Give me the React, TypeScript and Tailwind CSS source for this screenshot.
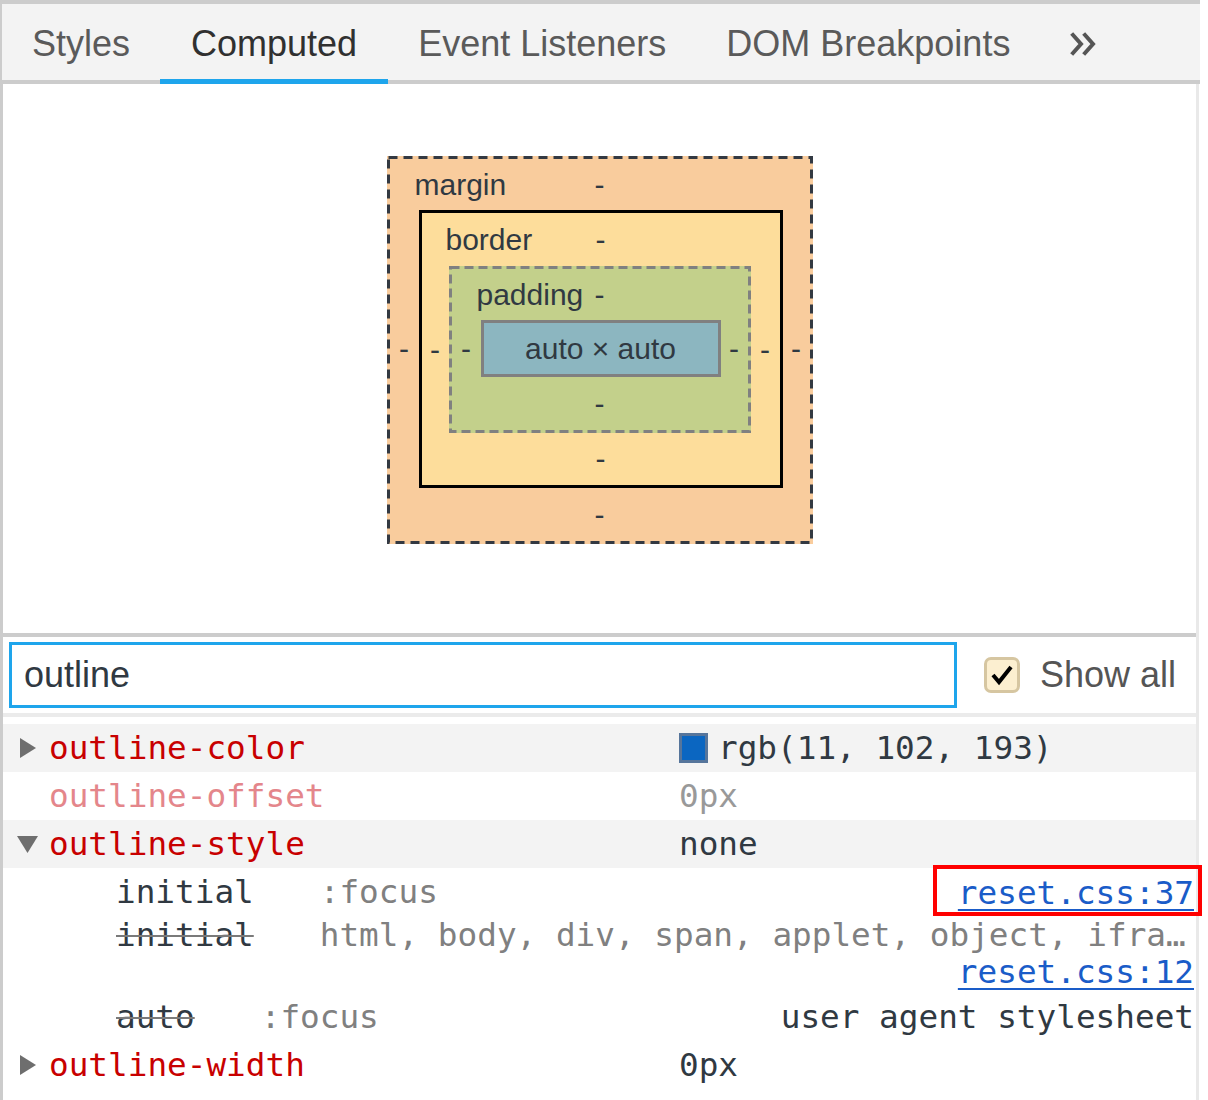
import React from 'react';

const mono = "font-['DejaVu_Sans_Mono',monospace]";
const tabs = ['Styles', 'Computed', 'Event Listeners', 'DOM Breakpoints'];

function Triangle({ open }: { open?: boolean }) {
  if (open) {
    return (
      <svg width="21" height="17" viewBox="0 0 21 17">
        <path d="M0 0H21L10.5 17Z" fill="#6e6e6e" />
      </svg>
    );
  }
  return (
    <svg width="16" height="20" viewBox="0 0 16 20">
      <path d="M0 0L16 10L0 20Z" fill="#6e6e6e" />
    </svg>
  );
}

// dashed frame drawn as svg so the dash length matches devtools
function DashedFrame({ w, h, color, dash }: { w: number; h: number; color: string; dash: string }) {
  return (
    <svg width={w} height={h} className="absolute left-0 top-0 pointer-events-none">
      <rect x="1.5" y="1.5" width={w - 3} height={h - 3} fill="none" stroke={color} strokeWidth="3" strokeDasharray={dash} />
    </svg>
  );
}

function Dash() {
  return <span className="leading-none">-</span>;
}

function PropRow({
  name,
  children,
  striped,
  faded,
  open,
  expandable,
}: {
  name: string;
  children: React.ReactNode;
  striped?: boolean;
  faded?: boolean;
  open?: boolean;
  expandable?: boolean;
}) {
  return (
    <div className={`h-[48px] flex items-center ${striped ? 'bg-[#f3f3f3]' : 'bg-white'}`}>
      <div className={`w-[46px] flex items-center ${open ? 'pl-[14px]' : 'pl-[17px]'}`}>
        {expandable && <Triangle open={open} />}
      </div>
      <div className={`w-[630px] leading-none ${faded ? 'text-[#e4868b]' : 'text-[#c80000]'}`}>{name}</div>
      <div className={`flex items-center leading-none ${faded ? 'text-[#999999]' : 'text-[#303942]'}`}>{children}</div>
    </div>
  );
}

export default function App() {
  return (
    <div className="w-[1208px] h-[1100px] bg-white overflow-hidden font-['Liberation_Sans',Arial,sans-serif]">
      {/* tab strip */}
      <div className="w-[1200px] h-[84px] bg-[#f3f3f3] border-t-4 border-l-2 border-[#cccccc] flex shadow-[inset_0_-4px_0_#cccccc]">
        {tabs.map((t) => (
          <div
            key={t}
            className={`px-[30px] flex items-center text-[36px] ${
              t === 'Computed' ? 'px-[31px] text-[#303030] shadow-[inset_0_-5px_0_#1ea5ec]' : 'text-[#5a5a5a]'
            }`}
          >
            {t}
          </div>
        ))}
        <div className="pl-[30px] flex items-center">
          <svg width="28" height="24" viewBox="0 0 28 24" fill="none" stroke="#555555" strokeWidth="4" strokeLinecap="square">
            <path d="M3 3L11 12L3 21" />
            <path d="M15 3L23 12L15 21" />
          </svg>
        </div>
      </div>

      <div className="w-[1199px] border-l-[3px] border-l-[#cccccc] border-r-[3px] border-r-[#e9e9e9]">
        {/* box model */}
        <div className="h-[549px] pt-[72px] flex justify-center items-start text-[30px] text-[#303942]">
          <div className="relative w-[426px] bg-[#f9cc9d] p-[3px] grid grid-cols-[29px_364px_27px] grid-rows-[51px_auto_53px]">
            <DashedFrame w={426} h={388} color="#333942" dash="9 6" />
            <div className="col-span-3 grid grid-cols-[1fr_auto_1fr] items-center">
              <span className="pl-[25px] leading-none">margin</span>
              <Dash />
              <span />
            </div>
            <div className="flex items-center justify-center"><Dash /></div>
            <div className="bg-[#fddd9b] border-[3px] border-black grid grid-cols-[27px_302px_29px] grid-rows-[53px_auto_52px]">
              <div className="col-span-3 grid grid-cols-[1fr_auto_1fr] items-center">
                <span className="pl-[24px] leading-none">border</span>
                <Dash />
                <span />
              </div>
              <div className="flex items-center justify-center"><Dash /></div>
              <div className="relative bg-[#c3d08b] p-[3px] grid grid-cols-[29px_240px_27px] grid-rows-[51px_57px_53px]">
                <DashedFrame w={302} h={167} color="#808080" dash="9 5" />
                <div className="col-span-3 grid grid-cols-[1fr_auto_1fr] items-center">
                  <span className="pl-[25px] leading-none">padding</span>
                  <Dash />
                  <span />
                </div>
                <div className="flex items-center justify-center"><Dash /></div>
                <div className="bg-[#8cb6c0] border-[3px] border-[#808080] flex items-center justify-center leading-none">
                  auto × auto
                </div>
                <div className="flex items-center justify-center"><Dash /></div>
                <div className="col-span-3 flex items-center justify-center"><Dash /></div>
              </div>
              <div className="flex items-center justify-center"><Dash /></div>
              <div className="col-span-3 flex items-center justify-center"><Dash /></div>
            </div>
            <div className="flex items-center justify-center"><Dash /></div>
            <div className="col-span-3 flex items-center justify-center"><Dash /></div>
          </div>
        </div>

        <div className="h-[4px] bg-[#cccccc]" />

        {/* filter */}
        <div className="h-[76px] flex items-center pl-[6px]">
          <input
            readOnly
            value="outline"
            className="w-[948px] h-[66px] border-[3px] border-[#1ea5ec] pl-[12px] text-[36px] text-[#303942] outline-none bg-white"
          />
          <div className="ml-[27px] w-[36px] h-[36px] rounded-[7px] border-[3px] border-[#d6c6a1] bg-[#fcefd0] flex items-center justify-center">
            <svg width="24" height="22" viewBox="0 0 24 22" fill="none" stroke="#000000" strokeWidth="4">
              <path d="M3 11L9 18L21 3" />
            </svg>
          </div>
          <span className="ml-[20px] text-[36px] text-[#555555] leading-none">Show all</span>
        </div>

        <div className="h-[4px] bg-[#ebebeb]" />
        <div className="h-[7px]" />

        {/* computed properties */}
        <div className={`${mono} text-[32.7px]`}>
          <PropRow name="outline-color" striped expandable>
            <span className="w-[29px] h-[30px] border-[3px] border-[#56759b] bg-[#0b66c1] mr-[10px]" />
            rgb(11, 102, 193)
          </PropRow>
          <PropRow name="outline-offset" faded>
            0px
          </PropRow>
          <PropRow name="outline-style" striped expandable open>
            none
          </PropRow>

          <div className="pt-[3px] text-[#303942] leading-none">
            <div className="h-[43px] flex items-center pl-[113px]">
              <span>initial</span>
              <span className="ml-[66px] text-[#808080]">:focus</span>
              <span className="ml-auto mr-[2px] relative block leading-[40px]">
                <span className="text-[#1a5cc8] underline decoration-2 underline-offset-[5px]">reset.css:37</span>
                <span className="absolute -left-[25px] -right-[8px] -top-[8px] -bottom-[3px] border-4 border-[#ff0000] z-10" />
              </span>
            </div>
            <div className="h-[43px] flex items-center pl-[113px]">
              <span className="shrink-0 line-through decoration-[#7a7a7a] decoration-2">initial</span>
              <span className="ml-[66px] text-[#808080] whitespace-nowrap">html, body, div, span, applet, object, ifra…</span>
            </div>
            <div className="h-[31px] flex items-center justify-end pr-[2px]">
              <span className="text-[#1a5cc8] underline decoration-2 underline-offset-[5px]">reset.css:12</span>
            </div>
            <div className="mt-[5px] h-[48px] flex items-center pl-[113px]">
              <span className="line-through decoration-[#7a7a7a] decoration-2">auto</span>
              <span className="ml-[66px] text-[#808080]">:focus</span>
              <span className="ml-auto mr-[2px]">user agent stylesheet</span>
            </div>
          </div>

          <PropRow name="outline-width" expandable>
            0px
          </PropRow>
          <div className="h-[20px]" />
        </div>
      </div>
    </div>
  );
}
